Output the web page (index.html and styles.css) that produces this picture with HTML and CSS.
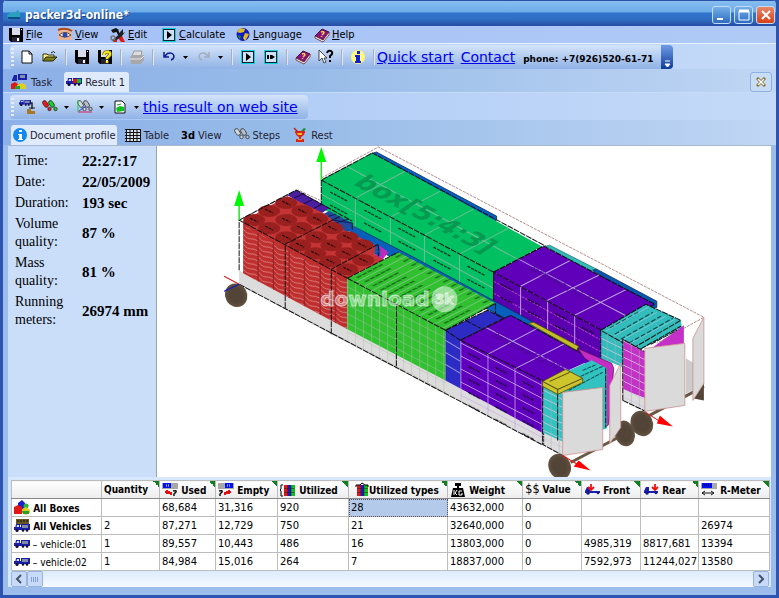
FILE: index.html
```html
<!DOCTYPE html>
<html lang="en">
<head>
<meta charset="utf-8">
<title>packer3d-online*</title>
<link rel="stylesheet" href="styles.css">
</head>
<body>
<svg class="defs" aria-hidden="true">
  <symbol id="save" viewBox="0 0 16 16"><path d="M1 1h14v14H3l-2-2z" fill="#000"/><path d="M4 1h8v7H4z" fill="#d8dcec"/><path d="M4 10h8v5H4z" fill="#223"/><path d="M9 11h2v3H9z" fill="#fff"/><path d="M13 2h1v1h-1z" fill="#fff"/></symbol>
  <symbol id="play" viewBox="0 0 16 16"><path d="M1 1h14v14H1z" fill="#10d0d8"/><path d="M2 2h12v12H2z" fill="#123"/><path d="M3 3h10v10H3z" fill="#cfe0f8"/><path d="M6 4l5 4-5 4z" fill="#000"/></symbol>
  <symbol id="step" viewBox="0 0 16 16"><path d="M1 1h14v14H1z" fill="#10d0d8"/><path d="M2 2h12v12H2z" fill="#123"/><path d="M3 3h10v10H3z" fill="#cfe0f8"/><path d="M4 6h2v4H4zM7 6h2v4H7zM9 6l3 2-3 2z" fill="#000"/></symbol>
  <symbol id="book" viewBox="0 0 16 16"><path d="M1 9l7-7 7 3-6 8z" fill="#8c1080" stroke="#401040"/><path d="M1 9l8 4 6-8v3l-6 7-8-4z" fill="#fff" stroke="#602020" stroke-width=".8"/><path d="M7 5q3-1 3 1l-2 2M7.500 9v1" stroke="#ffe040" stroke-width="1.400" fill="none"/></symbol>
  <symbol id="truck" viewBox="0 0 16 16"><path d="M1 9l1-5h4v6H1z" fill="#1c20a8"/><path d="M3 5h2v2H2.500z" fill="#cfe0ff"/><path d="M0 7h7v3H0z" fill="#1c20a8"/><path d="M7 4h9v6H7z" fill="#1c20a8"/><path d="M8 5h6v3H8z" fill="#7d8ba8"/><circle cx="3" cy="10.500" r="1.600" fill="#113"/><circle cx="9" cy="10.500" r="1.300" fill="#113"/><circle cx="13" cy="10.500" r="1.300" fill="#113"/></symbol>
  <symbol id="result" viewBox="0 0 16 16"><use href="#truck"/><path d="M7 5h4v4H7z" fill="#d81818"/><path d="M11 5h4v4h-4z" fill="#18b828"/></symbol>
  <symbol id="boxes" viewBox="0 0 16 16"><path d="M4 3l4-3 3 3v6H4z" fill="#2020c8"/><path d="M0 7l4-2 4 2v7H0z" fill="#e01818"/><circle cx="12" cy="6" r="2.500" fill="#28b838"/><path d="M8 9l4-2 4 3v3l-4 2-4-2z" fill="#d8d020"/><path d="M8 11h7v3H9z" fill="#28a030"/></symbol>
  <symbol id="task" viewBox="0 0 16 16"><path d="M1 6l2-5h3v6H1zM7 0h9v6H7z" fill="#1c20a8"/><path d="M9 1h5v3H9z" fill="#8090b0"/><path d="M0 10l4-2 3 2v5H0z" fill="#e01818"/><path d="M6 11l5-2 4 2v4H6z" fill="#d8d020"/><path d="M4 12h5v3H4z" fill="#28a030"/></symbol>
  <symbol id="feet" viewBox="0 0 16 16"><g stroke="#222" stroke-width=".7"><ellipse cx="3.500" cy="5" rx="2.200" ry="3.800" transform="rotate(-35 3.500 5)" fill="var(--a)"/><circle cx="7.500" cy="10" r="1.700" fill="var(--a)"/><ellipse cx="9.500" cy="5" rx="2.200" ry="3.800" transform="rotate(-35 9.500 5)" fill="var(--b)"/><circle cx="13.500" cy="10" r="1.700" fill="var(--b)"/></g></symbol>
  <symbol id="undo" viewBox="0 0 16 16"><path d="M3 3v5h5M3.500 7.500l3-3Q12 3 13 7q0 3-3 4" fill="none" stroke="currentColor" stroke-width="1.500"/></symbol>
  <symbol id="drop" viewBox="0 0 8 16"><path d="M2 7h5l-2.500 3z" fill="#000"/></symbol>
  <symbol id="used" viewBox="0 0 16 16"><path d="M0 1h16v6H0z" fill="#a8a8a8"/><path d="M1 1h8v5H1z" fill="#0010f0"/><path d="M4 3h4M4 4h4" stroke="#d0d8ff" stroke-dasharray="1 1"/><path d="M5 8v3h4v2M3 10h5" fill="none" stroke="#e01010" stroke-width="2"/></symbol>
  <symbol id="ask" viewBox="0 0 16 16"><path d="M11 9q4-1 3 1l-2 2v2" fill="none" stroke="#111" stroke-width="1.500"/></symbol>
  <symbol id="front" viewBox="0 0 16 16"><path d="M1 9l2-4h3v4h10v2H1z" fill="#1720a8"/><circle cx="4" cy="11" r="1.800" fill="#14188a"/><circle cx="14" cy="11" r="1.300" fill="#14188a"/><path d="M7 2v6M4 5l3 3 3-3" stroke="#f01010" stroke-width="1.800" fill="none"/></symbol>
  <symbol id="rear" viewBox="0 0 16 16"><path d="M1 9l2-4h3v4h9v2H1z" fill="#1720a8"/><circle cx="4" cy="11" r="1.800" fill="#14188a"/><circle cx="13" cy="11" r="1.300" fill="#14188a"/><path d="M12 2v6M9 5l3 3 3-3" stroke="#f01010" stroke-width="1.800" fill="none"/></symbol>
  <symbol id="bars" viewBox="0 0 16 16"><path d="M4 3h4v11H4z" fill="#e01818"/><path d="M8 3h3v11H8z" fill="#1818c8"/><path d="M11 3h4v11h-4z" fill="#10c020"/><path d="M4 6.500h11M4 10.500h11M7.500 3v11M11 3v11" stroke="#222" stroke-width=".5"/></symbol>
</svg>
<div class="window">
  <header class="title">
    <svg class="i" viewBox="0 0 16 16"><path d="M1 8l5-3 2 1 4-3 2 3v5l-5 1-4-1-3 2z" fill="#28a0c0"/><path d="M2 11h12" stroke="#0c4e88" stroke-width="2"/></svg>
    <h1>packer3d-online*</h1>
    <button class="wb" aria-label="Minimize"><svg viewBox="0 0 16 16"><path d="M3 11h6v2H3z" fill="#fff"/></svg></button>
    <button class="wb" aria-label="Maximize"><svg viewBox="0 0 16 16"><path d="M3 4h10v9H3z" fill="none" stroke="#fff"/><path d="M3 4h10" stroke="#fff" stroke-width="3"/></svg></button>
    <button class="wb close" aria-label="Close"><svg viewBox="0 0 16 16"><path d="M4 4l8 8M12 4l-8 8" stroke="#fff" stroke-width="2"/></svg></button>
  </header>
  <nav class="menu">
    <button><svg class="i"><use href="#save"/></svg><span><u>F</u>ile</span></button>
    <button><svg class="i" viewBox="0 0 16 16"><path d="M1 2h14v11H1z" fill="#e8b498"/><path d="M1 3q7-3 14 1" stroke="#a84c20" stroke-width="2" fill="none"/><path d="M2 8q6-5 12 0-6 4-12 0" fill="#fff" stroke="#643"/><circle cx="8" cy="8" r="2.500" fill="#2848b0"/></svg><span><u>V</u>iew</span></button>
    <button><svg class="i" viewBox="0 0 16 16"><path d="M1 3l5-2 3 2-3 2-3 1zM6 4l2-1 6 11h-3z" fill="#111"/><path d="M11 7l4 8h-4l-3-4z" fill="#e01818"/><path d="M10 5l3-3v4l2-1-3 4-8 6-2-2 8-6z" fill="#222"/><circle cx="3" cy="11" r="2" fill="none" stroke="#777" stroke-width="1.500"/><path d="M4 14h3" stroke="#d02020" stroke-width="2"/></svg><span><u>E</u>dit</span></button>
    <button><svg class="i"><use href="#play"/></svg><span><u>C</u>alculate</span></button>
    <button><svg class="i" viewBox="0 0 16 16"><circle cx="8" cy="7.500" r="6.500" fill="#1018c0"/><path d="M5 1l5 1-1 3-4 1-3-1zM10 6l4 1-2 4-2 3-2-3z" fill="#e0b828"/><path d="M2 8l4 1-1 4z" fill="#208040"/></svg><span><u>L</u>anguage</span></button>
    <button><svg class="i"><use href="#book"/></svg><span><u>H</u>elp</span></button>
  </nav>
  <div class="band">
    <div class="bar">
      <i class="grip"></i>
      <button aria-label="New"><svg class="i" viewBox="0 0 16 16"><path d="M3 2h7l3 3v9H3z" fill="#fff" stroke="#111"/><path d="M10 2v3h3" fill="none" stroke="#111"/></svg></button>
      <button aria-label="Open"><svg class="i" viewBox="0 0 16 16"><path d="M1 12V5h4l1 1h6v2" fill="#f8f080" stroke="#332"/><path d="M1 12l3-4h11l-4 4z" fill="#808010" stroke="#221"/><path d="M9 4q3-3 4 0" fill="none" stroke="#222"/></svg></button>
      <i class="sep"></i>
      <button aria-label="Save"><svg class="i"><use href="#save"/></svg></button>
      <button aria-label="Save as"><svg class="i" viewBox="0 0 16 16"><use href="#save"/><path d="M7 6q0-3 3-3 4 0 3 3l-3 3v1M10 12v2" fill="none" stroke="#776008" stroke-width="3.500"/><path d="M7 6q0-3 3-3 4 0 3 3l-3 3v1M10 12v2" fill="none" stroke="#f8ec20" stroke-width="2"/></svg></button>
      <i class="sep"></i>
      <button aria-label="Print"><svg class="i" viewBox="0 0 16 16"><path d="M5 2h8l-1 5H3z" fill="#ddd" stroke="#999"/><path d="M1 8l3-2h11v5l-3 4H2z" fill="#a8a8ac"/><path d="M1 10h11l3-3" stroke="#e8e8e8" fill="none"/></svg></button>
      <i class="sep"></i>
      <button aria-label="Undo" class="undo"><svg class="i"><use href="#undo"/></svg></button>
      <button aria-label="Undo list" class="drop"><svg><use href="#drop"/></svg></button>
      <button aria-label="Redo" class="redo"><svg class="i" viewBox="0 0 16 16"><use href="#undo" transform="matrix(-1 0 0 1 16 0)"/></svg></button>
      <button aria-label="Redo list" class="drop"><svg><use href="#drop"/></svg></button>
      <i class="sep"></i>
      <button aria-label="Run"><svg class="i"><use href="#play"/></svg></button>
      <button aria-label="Run step"><svg class="i"><use href="#step"/></svg></button>
      <i class="sep"></i>
      <button aria-label="Help"><svg class="i"><use href="#book"/></svg></button>
      <button aria-label="What is this"><svg class="i" viewBox="0 0 16 16"><path d="M1 1v11l3-3 2 5 2-1-2-4h3z" fill="#fff" stroke="#222" stroke-width=".8"/><path d="M9 4q1-3 4-2 3 2-1 5v2M12 11v2" fill="none" stroke="#000" stroke-width="2"/></svg></button>
      <i class="sep"></i>
      <button aria-label="Information"><svg class="i" viewBox="0 0 16 16"><circle cx="8" cy="8" r="7" fill="#fff878"/><path d="M7 2h3v3H7zM5 6h5v6h1v2H5v-2h1V8H5z" fill="#1020d0"/></svg></button>
      <i class="sep"></i>
      <a href="#start">Quick start</a><a href="#contact">Contact</a>
      <b class="phone">phone: +7(926)520-61-71</b>
      <button class="cap" aria-label="Toolbar options"><svg viewBox="0 0 12 24"><path d="M4 16h5M4 19h5l-2.500 3z" stroke="#fff" fill="#fff"/></svg></button>
    </div>
  </div>
  <div class="tabs docs">
    <button><svg class="i"><use href="#task"/></svg>Task</button>
    <button class="on"><svg class="i"><use href="#result"/></svg>Result 1</button>
    <button class="shut" aria-label="Close tab"><svg viewBox="0 0 10 10"><path d="M1 1l8 8M9 1l-8 8" stroke="#806c30" stroke-width="3"/><path d="M2 2l6 6M8 2l-6 6" stroke="#fff" stroke-width="1.500"/></svg></button>
  </div>
  <div class="band second">
    <div class="bar">
      <i class="grip"></i>
      <button aria-label="Unload"><svg class="i" viewBox="0 0 16 16"><use href="#truck" transform="translate(0 -2) scale(.75)"/><path d="M11 4h2v6" stroke="#222" stroke-width="1.500" fill="none"/><path d="M8 10h4v2h4v3H8z" fill="#a87828"/><path d="M10 9h6" stroke="#222"/></svg></button>
      <button aria-label="Steps"><svg class="i color"><use href="#feet"/></svg></button>
      <button aria-label="Steps list" class="drop"><svg><use href="#drop"/></svg></button>
      <button aria-label="Axes"><svg class="i gray" viewBox="0 0 16 16"><use href="#feet"/><path d="M1 1v12" stroke="#18d040"/><path d="M2 12l7-5" stroke="#3050d0"/><path d="M1 13h14" stroke="#e02060"/></svg></button>
      <button aria-label="Axes list" class="drop"><svg><use href="#drop"/></svg></button>
      <button aria-label="Export"><svg class="i" viewBox="0 0 16 16"><path d="M3 2h7l3 3v9H3z" fill="#fff" stroke="#111"/><path d="M4 9l4-2 4 1v4l-7 1z" fill="#10c020"/><path d="M5 6l4-1" stroke="#10a020"/></svg></button>
      <button aria-label="Export list" class="drop"><svg><use href="#drop"/></svg></button>
      <a href="#web">this result on web site</a>
    </div>
  </div>
  <div class="tabs views">
    <button class="on"><svg class="i" viewBox="0 0 16 16"><circle cx="8" cy="8" r="7" fill="#1088f0"/><path d="M7 3h3v2H7zM6 7h4v5h1v1H6v-1h1V8H6z" fill="#fff"/></svg>Document profile</button>
    <button><svg class="i" viewBox="0 0 16 16"><path d="M1 2h14v12H1z" fill="#d8e0ea"/><path d="M0 2.500h16M0 5.500h16M0 8.500h16M0 11.500h16M0 14.500h16M1.500 2v12M5 2v12M8.500 2v12M12 2v12M15.500 2v12" stroke="#111"/></svg>Table</button>
    <button><b>3d</b>View</button>
    <button><svg class="i gray"><use href="#feet"/></svg>Steps</button>
    <button><svg class="i" viewBox="0 0 16 16"><path d="M3 4h10q0 4-4 6v2h3v3H4v-3h3v-2Q3 8 3 4z" fill="#e02010"/><path d="M5 6h5v2H6zM6 12h4v1H6z" fill="#f8c020"/><path d="M9 4l3-3 2 1-2 2z" fill="#189030"/><path d="M2 1l4 4" stroke="#c02020" stroke-width="1.500"/></svg>Rest</button>
  </div>
  <main class="work">
    <dl class="profile">
      <dt>Time:</dt><dd>22:27:17</dd>
      <dt>Date:</dt><dd>22/05/2009</dd>
      <dt>Duration:</dt><dd>193 sec</dd>
      <dt>Volume quality:</dt><dd>87 %</dd>
      <dt>Mass quality:</dt><dd>81 %</dd>
      <dt>Running meters:</dt><dd>26974 mm</dd>
    </dl>
    <svg class="scene" viewBox="157 146 613 330" preserveAspectRatio="xMidYMid meet" role="img" aria-label="Two loaded vehicles">
      <defs>
        <pattern id="cells" width="8" height="9" patternUnits="userSpaceOnUse" patternTransform="translate(347 278) skewY(27.5)"><path d="M0 0V9M0 9H8" stroke="#b4bcae" fill="none" stroke-width="1"/></pattern>
        <pattern id="rings" width="15.500" height="5" patternUnits="userSpaceOnUse" patternTransform="translate(243 221) skewY(27.5)"><path d="M0 3q4 3 7 1t8-2" stroke="#d89090" fill="none" stroke-width=".8"/><path d="M15 0v5" stroke="#962020" stroke-width="1.500"/></pattern>
        <pattern id="marks" width="27" height="13" patternUnits="userSpaceOnUse" patternTransform="translate(460 342) skewY(27.5)"><path d="M0 0H27" stroke="#d0b0e8" stroke-width="1.600"/><path d="M0 0V13" stroke="#c0a8e8" stroke-width="1.600"/><path d="M8 7h12" stroke="#100028" stroke-width="1.400" stroke-dasharray="3 1"/></pattern>
        <pattern id="rows" width="8" height="8" patternUnits="userSpaceOnUse" patternTransform="translate(622 340) skewY(26)"><path d="M0 0H8" stroke="#d8c4e0" stroke-width="1.600"/><path d="M0 0V8" stroke="#a8b0b8" stroke-width="1"/></pattern>
        <pattern id="labels" width="44" height="9" patternUnits="userSpaceOnUse" patternTransform="matrix(.88 -.46 .88 .46 347 278)"><path d="M6 5h30" stroke="#103010" stroke-width="1.200" stroke-dasharray="5 1"/><path d="M0 0h44" stroke="#98c898" stroke-width="1.600"/></pattern>
        <radialGradient id="tyre"><stop offset=".6" stop-color="#524436"/><stop offset="1" stop-color="#625242"/></radialGradient>
      </defs>
      <g class="wire"><path d="M321 178L378 147L703 317L656 343M239 220L298 190L330 205"/></g>
      <!-- rear vehicle -->
      <path d="M370 154l6-2 120 64v4l-3 1z" fill="#0860c0" stroke="#0a2a60" stroke-width=".8"/>
      <path d="M545 246l4-1 47 24-2 5z" fill="#30bcb8" stroke="#155" stroke-width=".6"/>
      <path d="M592 270l4-1 60 32v6l-5 3z" fill="#0858b0" stroke="#0a2a60" stroke-width=".8"/>
      <path d="M321 180L372 153L541 246L493 272z" fill="#00c062"/>
      <path d="M321 180L493 272V304L321 208z" fill="#00c064"/>
      <path d="M321 194L493 288M355 198V226M390 217V245M424 235V264M459 254V282M355 198L405 171M390 217L440 191M424 235L473 209M459 254L508 228M346 166L517 259" stroke="#70bc94" fill="none"/>
      <path d="M330 192l17 9M364 210l17 9M398 228l17 9M433 247l17 9M467 266l17 9M330 205l17 9M364 223l17 9M398 241l17 9M433 260l17 9M467 279l17 9" stroke="#063820" stroke-width="1.300" stroke-dasharray="3 1"/>
      <text class="boxname" transform="matrix(.87 .46 -.8 .56 352 184)">box[5:4:3]</text>
      <path class="edge" d="M321 207V180L372 153L545 246M321 180L493 272V303M493 272L543 246"/>
      <path d="M493 272L543 246L654 304L601 330z" fill="#6000ba"/>
      <path d="M493 272L601 330V372L493 315z" fill="#5b00b0"/>
      <path d="M493 281L601 340M493 293L601 352" stroke="#b040c0" stroke-dasharray="3 1"/>
      <path d="M520 286v31M547 300v31M574 315v31M520 286L570 260M547 300L598 275M574 315L626 289M518 259L628 317" stroke="#b8a0dc" fill="none"/>
      <path d="M500 284l12 6M527 299l12 6M554 313l12 6M581 327l12 6M500 297l12 6M527 311l12 6M554 325l12 6" stroke="#180030" stroke-width="1.400" stroke-dasharray="3 1"/>
      <path class="edge" d="M493 303V272L601 330M493 272L543 246L654 304L601 330"/>
      <path d="M349 224L415 258L542 327L579 347L573 352L415 273L350 231z" fill="#0860bc" stroke="#073060" stroke-width=".8"/>
      <path d="M600 330L645 304L680 320L681 327L633 353V376L620 366L600 358z" fill="#32bcbc"/>
      <path d="M600 330L633 347V376L600 358z" fill="url(#rows)"/>
      <path d="M609 328l30-17M614 334l38-22M620 339l40-23M628 343l44-25" stroke="#094848" stroke-width="1.200" stroke-dasharray="5 2"/>
      <path d="M605 331l44-25M611 337l45-25M617 342l48-26M624 346l50-27" stroke="#9cd" stroke-width=".7"/>
      <path class="edge" d="M600 330L645 304L680 320L632 348zV358M632 348v5L680 326"/>
      <path d="M622 339L645 352L683 325V360L645 398L622 389z" fill="#c430c8"/>
      <path d="M622 389L645 398V411L622 400z" fill="#dcdcdc"/>
      <path d="M622 339L645 352V411L622 400z" fill="url(#rows)"/>
      <path class="edge" d="M622 400V339L645 352M622 400L645 411M650 344L676 330"/>
      <path d="M685 358l8 5v26l-8 4z" fill="#ccc"/>
      <path d="M645 417L703 386" stroke="#685848" stroke-width="3"/>
      <path d="M693 398q2-9 10-16v18z" fill="#524436"/>
      <path class="door" d="M644 348L684 343V405L644 411zM703 317L692 338V400L703 383z"/>
      <ellipse class="tyre" cx="641" cy="423" rx="11" ry="13" transform="rotate(-25 641 423)"/>
      <path d="M645 412L659 421" stroke="#e02020"/><path d="M659 415L672 426L656 423z" fill="#f00"/>
      <!-- front vehicle -->
      <path d="M239 270L347 329L562 440V455L541 444L331 334L239 284z" fill="#dcdcdc"/>
      <path d="M287 195l9-5 33 18-10 7z" fill="#4a20a0"/><path d="M294 198l10-5M303 204l10-5M312 209l10-5" stroke="#140838"/>
      <path d="M319 216l10-5 23 12-1 8-9 1z" fill="#24489c"/><path d="M325 217l11-3M335 223l13-4M320 218l32 5v7" stroke="#081c48" fill="none"/>
      <path d="M368 248l12-2 8 6-7 9z" fill="#c028c0"/>
      <path d="M345 224l7 6 28 18v8l-20-8z" fill="#1458b4"/>
      <path d="M243 221L287 196L325 214L344 230L375 245L374 254L383 260L347 279z" fill="#c43434"/>
      <path d="M243 221L347 278V329L243 273z" fill="#c02e2e"/><path d="M243 225L347 282V329L243 273z" fill="url(#rings)"/>
      <g fill="#9a2020"><ellipse cx="286" cy="203" rx="11" ry="6"/><ellipse cx="269" cy="211" rx="11" ry="6"/><ellipse cx="302" cy="211" rx="11" ry="6"/><ellipse cx="254" cy="220" rx="11" ry="6"/><ellipse cx="286" cy="220" rx="11" ry="6"/><ellipse cx="317" cy="219" rx="11" ry="6"/><ellipse cx="269" cy="228" rx="11" ry="6"/><ellipse cx="301" cy="228" rx="11" ry="6"/><ellipse cx="332" cy="228" rx="11" ry="6"/><ellipse cx="286" cy="237" rx="11" ry="6"/><ellipse cx="316" cy="237" rx="11" ry="6"/><ellipse cx="347" cy="237" rx="11" ry="6"/><ellipse cx="300" cy="245" rx="11" ry="6"/><ellipse cx="331" cy="245" rx="11" ry="6"/><ellipse cx="362" cy="245" rx="11" ry="6"/><ellipse cx="315" cy="253" rx="11" ry="6"/><ellipse cx="346" cy="253" rx="11" ry="6"/><ellipse cx="330" cy="261" rx="11" ry="6"/><ellipse cx="363" cy="260" rx="11" ry="6"/><ellipse cx="347" cy="269" rx="11" ry="6"/></g>
      <path d="M282 201l8 4M265 209l8 4M298 209l8 4M250 218l8 4M282 218l8 4M313 217l8 4M265 226l8 4M297 226l8 4M328 226l8 4M282 235l8 4M312 235l8 4M343 235l8 4M296 243l8 4M327 243l8 4M358 243l8 4M311 251l8 4M342 251l8 4M326 259l8 4M359 258l8 4M343 267l8 4" stroke="#220808" stroke-width="1.200" stroke-dasharray="3 1"/>
      <path class="edge" d="M239 270V220L347 278M239 220L296 190L352 221M285 308V244L342 215M331 334V269L378 244V256"/>
      <path d="M347 278L398 252L495 303L445 330z" fill="#30c030"/><path d="M347 278L398 252L495 303L445 330z" fill="url(#labels)"/>
      <path d="M347 278L445 330V380L347 329z" fill="#30c030"/><path d="M347 278L445 330V393L347 342z" fill="url(#cells)"/>
      <path class="edge" d="M347 278L445 330L495 303V313M396 304V367M347 278L398 252"/>
      <path d="M445 330L487 310L503 318L460 340V388L445 380z" fill="#2c2cc4"/><path d="M445 340l15 9M445 352l15 9M445 364l15 9" stroke="#a0a0d8"/><path class="edge" d="M445 330L487 310L503 318L460 340zM465 320l15 8"/>
      <path d="M460 340L510 315L592 359L543 381V433L460 388z" fill="#6000be"/>
      <path d="M460 340L543 381V445L460 401z" fill="url(#marks)"/>
      <path d="M487 354L537 328M515 368L565 343M485 327L568 370" stroke="#b8a0dc"/>
      <text class="small" transform="matrix(.87 .46 -.8 .56 490 335)">Загрузка [12:37]</text>
      <text class="small" transform="matrix(.87 .46 -.8 .56 526 268)">Загрузка [12:37]</text>
      <path class="edge" d="M460 340L510 315L592 359M460 340L543 381V444"/>
      <path d="M528 323l5-1 45 24-2 4z" fill="#c4bc28" stroke="#554808" stroke-width=".7"/>
      <path d="M577 348l34 15 2 5-5 56-4 4V371l-20-13z" fill="#c42cc4" stroke="#501050" stroke-width=".7"/>
      <path d="M543 381L591 360L606 368V428L562 441L542 432z" fill="#32c2c0"/>
      <path d="M542 386L562 395V454L542 444z" fill="url(#rows)"/>
      <path d="M582 370l14-6M580 376l22-10M568 390l34-18" stroke="#0b4c4c" stroke-dasharray="4 1"/>
      <path d="M542 381L565 369L582 378V382L557 394L542 386z" fill="#cdc52c" stroke="#4b450e" stroke-width=".8"/><path d="M542 381l15 8 25-11M557 389v5M549 381l20-9" fill="none" stroke="#4b450e"/>
      <path class="edge" d="M542 386V444L562 455M557 394V440M239 284L541 444M605 368V427"/>
      <path d="M570 462L621 435" stroke="#685848" stroke-width="3"/>
      <ellipse class="tyre" cx="624" cy="433" rx="10" ry="13" transform="rotate(-15 624 433)"/>
      <path class="door" d="M562 392L602 387V449L562 455zM620 363L609 385V443L620 427z"/>
      <ellipse class="tyre" cx="559" cy="466" rx="11" ry="13" transform="rotate(-25 559 466)"/>
      <path d="M562 455L577 464" stroke="#e02020"/><path d="M578 460L590 470L573 466z" fill="#f00"/>
      <ellipse class="tyre" cx="236" cy="295" rx="11" ry="12" transform="rotate(-30 236 295)"/>
      <path d="M224 276L239 284" stroke="#d01818"/><path d="M224 291L239 284" stroke="#1018c0"/>
      <path d="M239 190L234 206H244zM321 147L316 162H326z" fill="#00f800"/><path d="M239 206V220M321 162V180" stroke="#20e820" stroke-width="1.500"/>
      <g class="mark"><text x="320" y="306">download</text><circle cx="444" cy="299" r="13"/><text class="logo" x="434" y="304">3k</text></g>
    </svg>
  </main>
  <section class="data">
    <table>
      <colgroup><col class="c1"><col class="c2"><col class="c3"><col class="c4"><col class="c5"><col class="c6"><col class="c7"><col class="c8"><col class="c8"><col class="c9"><col class="c10"></colgroup>
      <thead><tr><th></th><th class="f">Quantity</th><th class="f"><svg class="i" viewBox="0 0 16 16"><use href="#used"/><use href="#ask"/></svg> Used</th><th class="f"><svg class="i" viewBox="0 0 16 16"><use href="#used" transform="matrix(-1 0 0 1 16 0)"/><use href="#ask" x="-10"/></svg> Empty</th><th class="f"><svg class="i" viewBox="0 0 16 16"><use href="#bars"/><path d="M3 3H1v4L0 8l1 1v5h2" fill="none" stroke="#000"/></svg> Utilized</th><th class="f in"><svg class="i" viewBox="0 0 16 16"><use href="#bars"/><path d="M3 5V3h4l2-2 3 2h3v2" fill="none" stroke="#000"/></svg>Utilized types</th><th class="f"><svg class="i" viewBox="0 0 16 16"><path d="M5 1h6v3H9v2h4l2 9H1l2-9h4V4H5z" fill="#000"/><path d="M4 8v5M7 8l-2 3 2 2M12 9H9v4h3v-2" stroke="#fff" fill="none"/></svg> Weight</th><th class="f"><span class="cash">$$</span> Value</th><th class="f"><svg class="i"><use href="#front"/></svg> Front</th><th class="f"><svg class="i"><use href="#rear"/></svg> Rear</th><th class="f"><svg class="i" viewBox="0 0 16 16"><path d="M0 1h16v6H0z" fill="#a8a8a8"/><path d="M1 1h10v5H1z" fill="#0010f0"/><path d="M3 3h6" stroke="#000" stroke-dasharray="1 1"/><path d="M2 11h10M4 9l-3 2 3 2M10 9l3 2-3 2" fill="none" stroke="#111"/></svg> R-Meter</th></tr></thead>
      <tbody>
        <tr><th><svg class="i"><use href="#boxes"/></svg> All Boxes</th><td></td><td>68,684</td><td>31,316</td><td>920</td><td class="sel">28</td><td>43632,000</td><td>0</td><td></td><td></td><td></td></tr>
        <tr><th><svg class="i" viewBox="0 0 16 16"><path d="M2 1h13v6H2z" fill="#665820"/><path d="M3 3h11" stroke="#111" stroke-dasharray="2 1"/><use href="#truck" transform="translate(0 2)"/></svg> All Vehicles</th><td>2</td><td>87,271</td><td>12,729</td><td>750</td><td>21</td><td>32640,000</td><td>0</td><td></td><td></td><td>26974</td></tr>
        <tr><th class="sub"><svg class="i"><use href="#truck"/></svg> – vehicle:01</th><td>1</td><td>89,557</td><td>10,443</td><td>486</td><td>16</td><td>13803,000</td><td>0</td><td>4985,319</td><td>8817,681</td><td>13394</td></tr>
        <tr><th class="sub"><svg class="i"><use href="#truck"/></svg> – vehicle:02</th><td>1</td><td>84,984</td><td>15,016</td><td>264</td><td>7</td><td>18837,000</td><td>0</td><td>7592,973</td><td>11244,027</td><td>13580</td></tr>
      </tbody>
    </table>
    <div class="scroll">
      <button aria-label="Scroll left"><svg viewBox="0 0 14 14"><path d="M9 3L5 7l4 4" fill="none" stroke="#456" stroke-width="2"/></svg></button>
      <button aria-label="Scroll thumb"><svg viewBox="0 0 14 14"><path d="M3.500 5v5M5.500 5v5M7.500 5v5M9.500 5v5" stroke="#86a0cc"/></svg></button>
      <button class="right" aria-label="Scroll right"><svg viewBox="0 0 14 14"><path d="M5 3l4 4-4 4" fill="none" stroke="#456" stroke-width="2"/></svg></button>
    </div>
  </section>
</div>
</body>
</html>
```
FILE: styles.css
```css
* { box-sizing: border-box; }
body { margin: 0; background: #2a52b0; font-family: "DejaVu Sans Condensed", "DejaVu Sans", sans-serif; font-size: 11px; color: #000; }
button { border: 0; padding: 0; margin: 0; background: none; font: inherit; color: inherit; display: flex; align-items: center; }
.defs { display: none; }
.i { width: 16px; height: 16px; flex: none; }
.window { min-height: 100vh; display: flex; flex-direction: column; border: solid #2c54b0; border-width: 0 3px 3px; border-radius: 6px 6px 0 0; background: #9cbcec; overflow: hidden; }

.title { height: 26px; margin: 0 -3px; padding: 3px 4px 0 6px; display: flex; align-items: center; gap: 3px; background: linear-gradient(#2850a8 0 1px, #88bef0 1px, #6cace8 12px, #2f74cc 13px, #3070c4 19px, #2850a8 25px); color: #fff; }
.title h1 { flex: 1; margin: 0; font-size: 12px; text-shadow: 1px 1px #1c4080; }
.wb { width: 19px; height: 18px; border: 1px solid #c4dcf4; border-radius: 3px; background: linear-gradient(#75b0e8, #2c6cc0); justify-content: center; }
.wb svg { width: 16px; height: 16px; }
.wb.close { background: linear-gradient(#e88868, #d84018); }

.menu { height: 17px; padding-left: 5px; display: grid; grid-template-columns: 49px 53px 51px 74px 79px 60px; align-items: center; background: linear-gradient(90deg, #a4c0f6, #b0caf6); }
.menu button { gap: 2px; }

.band { border-top: 1px solid #e8f2ff; background: linear-gradient(90deg, #a8c6f6, #c4daf8); padding: 1px 7px 0; }
.bar { display: flex; align-items: center; gap: 7px; width: max-content; height: 24px; border-radius: 4px; background: linear-gradient(#d4e4fa, #90b2e6); }
.bar .i, .bar .drop svg { display: block; }
.drop { margin-left: -3px; }
.drop svg { width: 8px; height: 16px; }
.grip { width: 3px; height: 18px; margin-left: 1px; margin-right: -2px; background: repeating-linear-gradient(#e4ecf8 0 2px, transparent 2px 4px); }
.sep { width: 2px; height: 16px; background: linear-gradient(90deg, #a8b0bc 1px, #dce6f4 1px); }
.undo { color: #101c90; }
.redo { color: #a4acb8; }
.bar a { color: #00e; font-family: "DejaVu Sans", sans-serif; font-size: 14px; margin-left: -5px; margin-right: 5px; }
.phone { font-family: "DejaVu Sans", sans-serif; font-size: 9px; padding-top: 3px; margin-left: -4px; }
.cap { width: 12px; height: 24px; border-radius: 0 4px 4px 0; background: linear-gradient(#6e9ce8, #103c98); }
.cap svg { width: 12px; height: 24px; }

.tabs { display: flex; align-items: flex-end; background: linear-gradient(90deg, #8cb0e8, #98bce8 40%, #c0d6f4); }
.tabs button { height: 20px; padding: 0 4px; gap: 4px; color: #223; }
.tabs .on { background: #dfebfc; border-radius: 3px 3px 0 0; }
.docs { height: 24px; padding: 0 4px; border-bottom: 1px solid #c4dcf8; }
.docs .on { margin-left: 8px; padding: 0 4px 0 2px; gap: 3px; }
.docs .shut { margin-left: auto; padding: 0 5px; border: 1px solid #8cb0e0; border-radius: 3px; background: #c8dcf4; }
.shut svg { width: 10px; height: 10px; }
.second { height: 27px; border: 0; padding-top: 2px; }
.second a { margin-left: -4px; margin-right: 10px; }
.color { --a: #f01818; --b: #18d028; }
.gray { --a: #d4d8de; --b: #b8c0c8; }
.views { height: 25px; padding: 0 8px; }
.tabs.views .on { padding: 0 1px; gap: 2px; margin-right: 4px; }
.views button + button { margin-right: 4px; gap: 3px; }
.views b { font-size: 11px; color: #000; }

.work { flex: 1; display: flex; min-height: 0; margin: 0 5px; background: #fff; border-top: 1px solid #a8b8d0; }
.profile { width: 149px; flex: none; margin: 0; padding: 6px 0 0 7px; background: #cadefa; border-right: 1px solid #98a4b4; display: grid; grid-template-columns: 60px 1fr; column-gap: 7px; row-gap: 3px; align-content: start; align-items: center; font: 14px/18px "Liberation Serif", serif; }
.profile dd { margin: 0; font-size: 15px; font-weight: bold; white-space: nowrap; }
.scene { flex: 1; min-width: 0; width: 100%; height: auto; align-self: flex-start; }
.wire { fill: none; stroke: #a07070; stroke-width: .8; stroke-dasharray: 3 1; }
.edge { fill: none; stroke: #101010; stroke-width: 1; stroke-dasharray: 6 1; }
.door { fill: #dadada; stroke: #d09090; stroke-width: .8; }
.tyre { fill: url(#tyre); }
.boxname { font: bold 26px "DejaVu Sans", sans-serif; fill: #069a50; }
.small { font: 9px "DejaVu Sans", sans-serif; fill: #4a0890; }
.mark text { font: bold 20px "DejaVu Sans", sans-serif; fill: #fff; fill-opacity: .4; stroke: #fff; stroke-opacity: .6; stroke-width: .8; }
.mark .logo { font-size: 14px; }
.mark circle { fill: #fff; fill-opacity: .5; }

.data { margin: 0 5px 8px; padding: 3px 2px 0 3px; background: #d8e8fc; }
table { width: 100%; table-layout: fixed; border-collapse: collapse; background: #fff; border: 1px solid #a8a8a8; }
.c1 { width: 90px; } .c2 { width: 58px; } .c3 { width: 56px; } .c4 { width: 62px; } .c5 { width: 71px; } .c6 { width: 99px; } .c7 { width: 75px; } .c8 { width: 59px; } .c9 { width: 58px; } .c10 { width: 71px; }
th, td { height: 18px; padding: 0 2px; border: 1px solid #bcbcbc; text-align: left; white-space: nowrap; overflow: hidden; line-height: 14px; }
th .i { vertical-align: -4px; }
thead th { border-bottom-color: #888; background: linear-gradient(#fff, #ececec); font-size: 10px; }
thead .f { background: linear-gradient(45deg, transparent 50%, #108020 50%) top right / 6px 6px no-repeat, linear-gradient(#fff, #ececec); }
thead .in { padding-left: 4px; }
.cash { font-family: "DejaVu Sans Mono", monospace; font-weight: normal; font-size: 12px; }
tbody th { font-size: 10px; }
tbody td { font-size: 10px; font-family: "DejaVu Sans", sans-serif; }
tbody .sub { font-weight: normal; }
.sel { background: #b4caea; outline: 1px dotted #556; outline-offset: -1px; }
.scroll { display: flex; height: 16px; background: linear-gradient(#dcebfc, #f6faff); }
.scroll button { width: 16px; border: 1px solid #98b4dc; border-radius: 2px; background: #c8dafa; justify-content: center; }
.scroll svg { width: 14px; height: 14px; }
.scroll .right { margin-left: auto; }
```
